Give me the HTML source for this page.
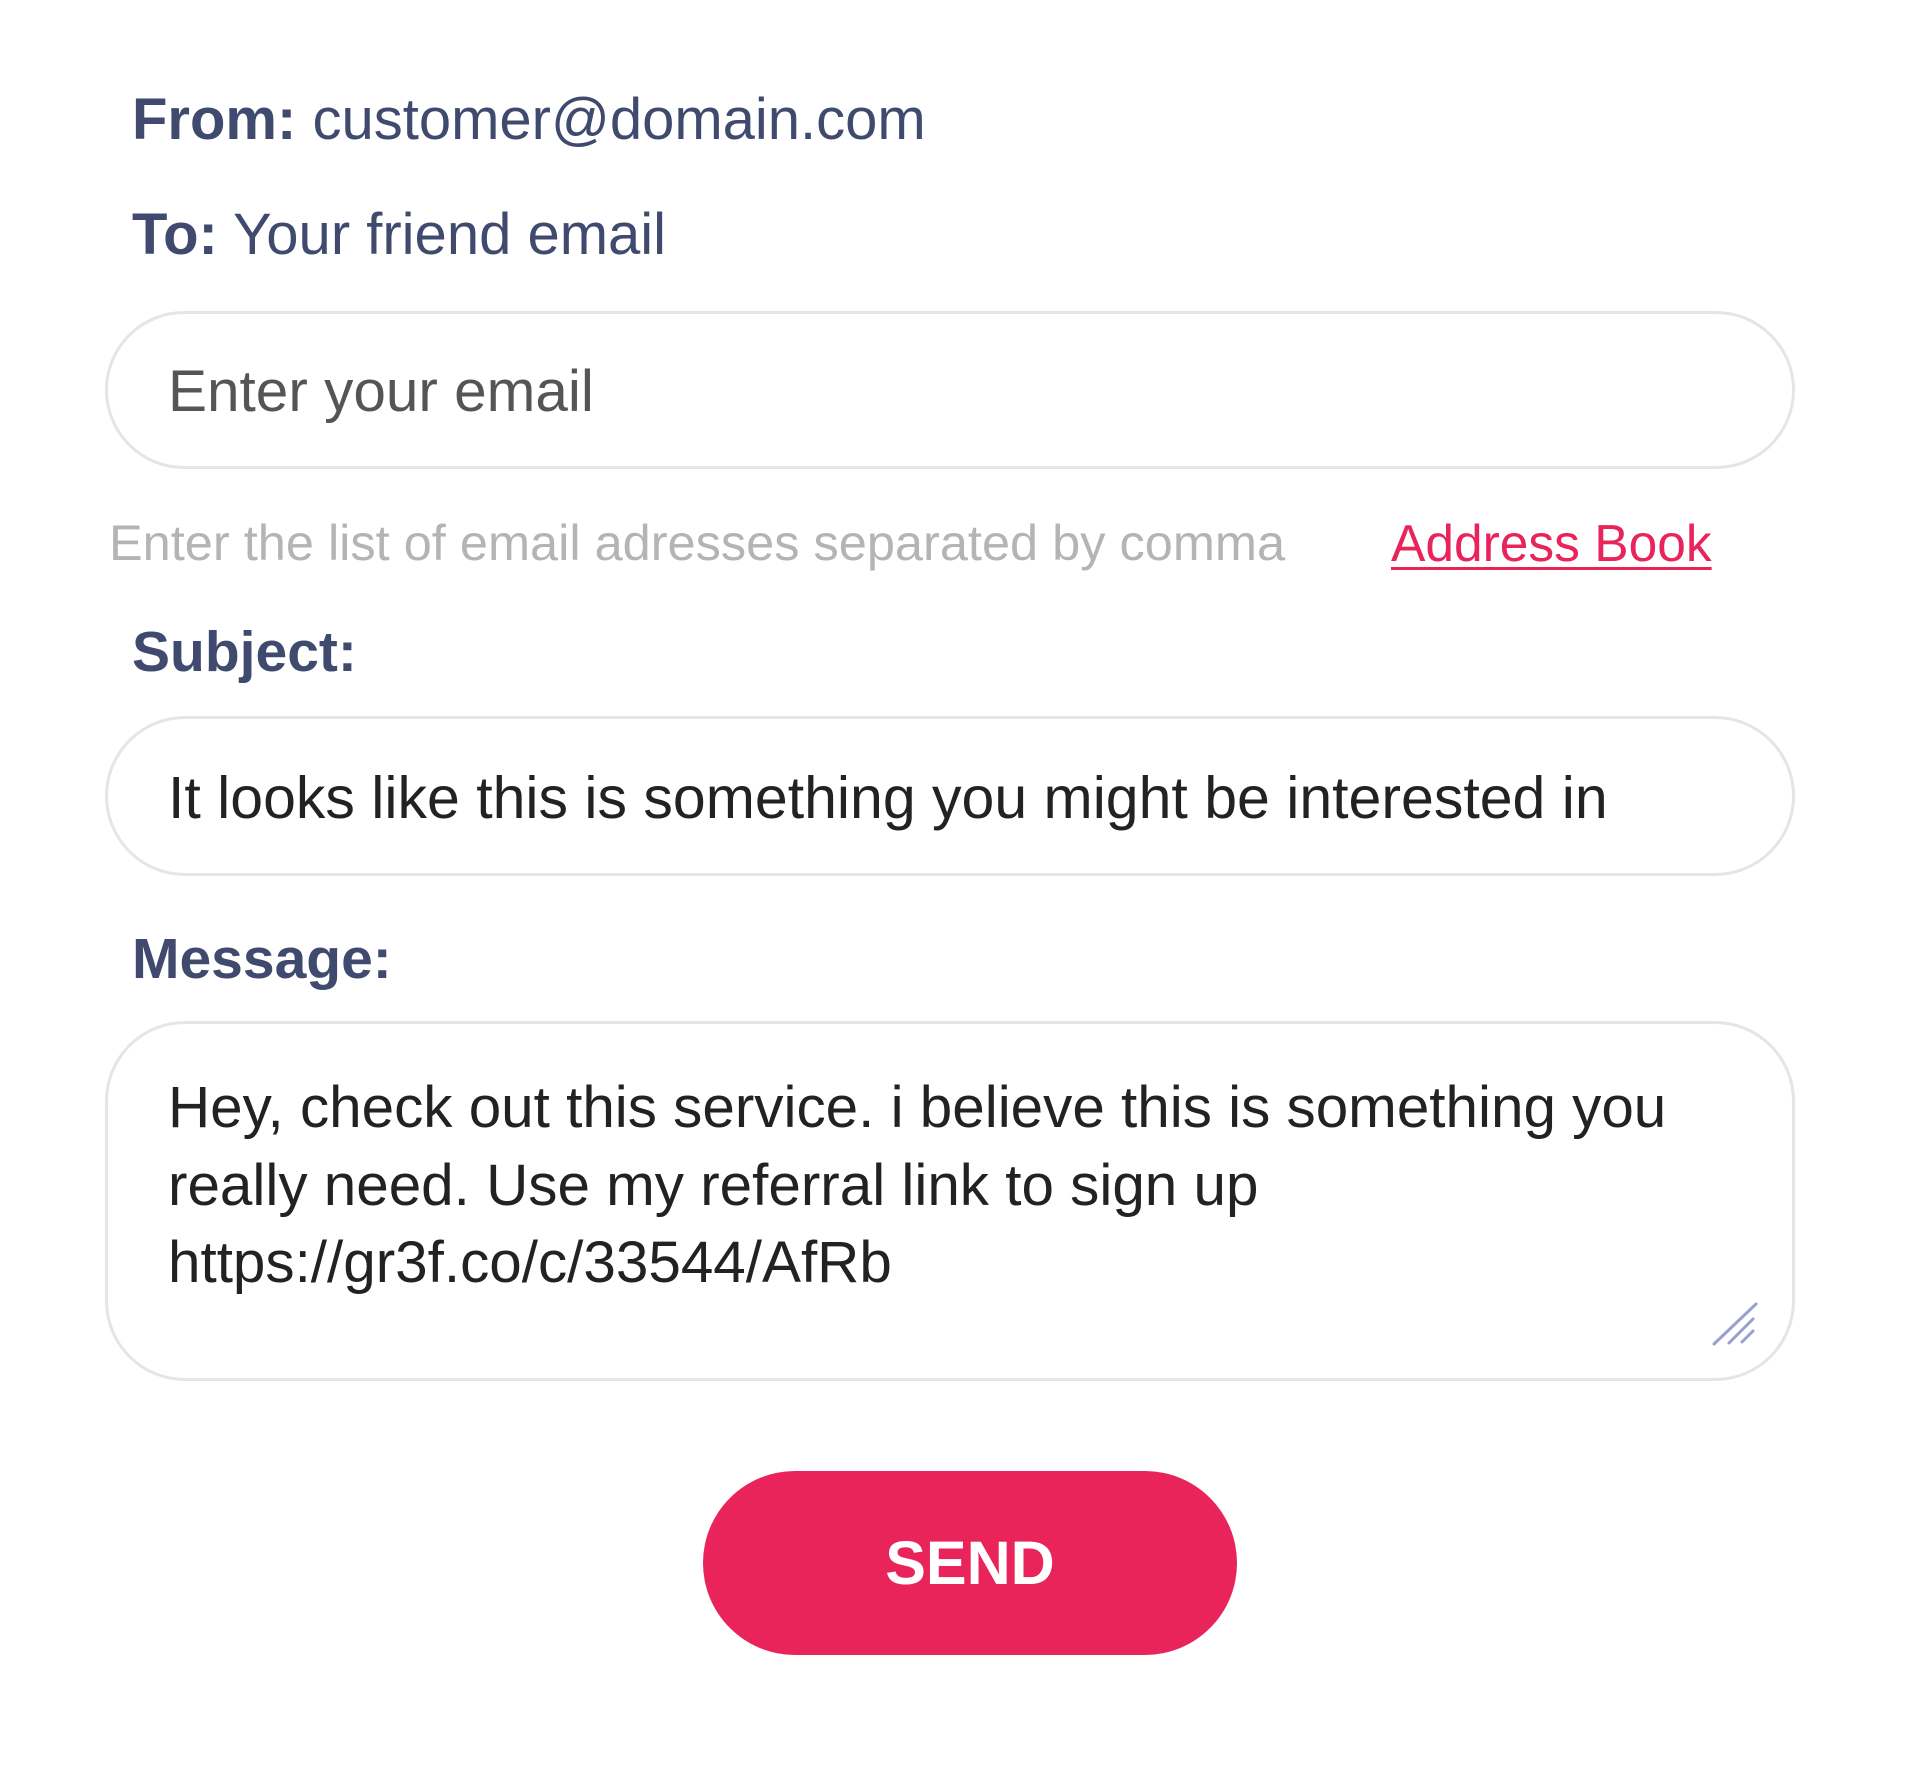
<!DOCTYPE html>
<html><head><meta charset="utf-8"><style>
html,body{margin:0;padding:0;background:#fff;width:1911px;height:1777px;overflow:hidden;font-family:"Liberation Sans",sans-serif}
.t{position:absolute;white-space:nowrap;line-height:80px;height:80px}
.lab{color:#3f4a6e}
.lab b{font-weight:bold}
.box{position:absolute;border:3px solid #e3e6e7;box-sizing:border-box;background:#fff}
</style></head><body>
<div class="t lab" style="left:132px;top:80px;font-size:58px"><b>From:</b> customer@domain.com</div>
<div class="t lab" style="left:132px;top:195px;font-size:58px"><b>To:</b> Your friend email</div>
<div class="box" style="left:105px;top:311px;width:1690px;height:158px;border-radius:80px"></div>
<div class="t" style="left:168px;top:352px;font-size:58.5px;color:#555">Enter your email</div>
<div class="t" style="left:109px;top:503px;font-size:50.5px;color:#b4b4b4">Enter the list of email adresses separated by comma</div>
<div class="t" style="left:1391px;top:503px;font-size:51.5px;color:#e8245a;text-decoration:underline;text-decoration-thickness:3px;text-underline-offset:6px">Address Book</div>
<div class="t lab" style="left:132px;top:612px;font-size:57px"><b>Subject:</b></div>
<div class="box" style="left:105px;top:716px;width:1690px;height:160px;border-radius:80px"></div>
<div class="t" style="left:168px;top:758px;font-size:59px;color:#222">It looks like this is something you might be interested in</div>
<div class="t lab" style="left:132px;top:919px;font-size:57px"><b>Message:</b></div>
<div class="box" style="left:105px;top:1021px;width:1690px;height:360px;border-radius:80px"></div>
<div class="t" style="left:168px;top:1068px;font-size:58.4px;color:#222">Hey, check out this service. i believe this is something you</div>
<div class="t" style="left:168px;top:1146px;font-size:58.4px;color:#222">really need. Use my referral link to sign up</div>
<div class="t" style="left:168px;top:1223px;font-size:58.4px;color:#222">https://gr3f.co/c/33544/AfRb</div>
<svg style="position:absolute;left:0;top:0" width="1911" height="1777"><g stroke="#99a0d0" stroke-width="3" stroke-linecap="round"><line x1="1714" y1="1344" x2="1756" y2="1304"/><line x1="1729" y1="1343" x2="1753" y2="1319"/><line x1="1742" y1="1342" x2="1753" y2="1331"/></g></svg>
<div style="position:absolute;left:703px;top:1471px;width:534px;height:184px;border-radius:92px;background:#e8245a;color:#fff;font-weight:bold;font-size:61px;line-height:184px;text-align:center">SEND</div>
</body></html>
